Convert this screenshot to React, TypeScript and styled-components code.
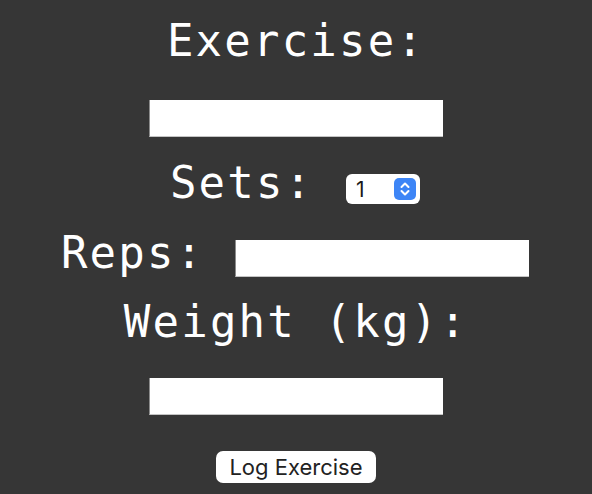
import { FC } from "react";
import styled, { createGlobalStyle } from "styled-components";

const GlobalStyle = createGlobalStyle`
    html, body {
        margin: 0;
        padding: 0;
        background-color: #363636;
    }
    * {
        box-sizing: border-box;
    }
`;

const Page = styled.form`
    width: 592px;
    min-height: 494px;
    display: flex;
    flex-direction: column;
    align-items: center;
    padding-top: 19px;
`;

const Label = styled.label<{ $top?: number; $drop?: number }>`
    display: block;
    height: 44px;
    margin-top: ${({ $top }) => $top ?? 0}px;
    margin-bottom: ${({ $drop }) => $drop ?? 0}px;
    font-family: "DejaVu Sans Mono", "Liberation Mono", monospace;
    font-size: 44px;
    line-height: 44px;
    letter-spacing: 2.2px;
    color: #ffffff;
    white-space: pre;
`;

const TextInput = styled.input<{ $top?: number; $left?: number }>`
    display: block;
    width: 294px;
    height: 37px;
    margin: ${({ $top }) => $top ?? 0}px 0 0 ${({ $left }) => $left ?? 0}px;
    padding: 0 6px;
    background: #ffffff;
    border: none;
    border-left: 1px solid #8c8c8c;
    border-bottom: 1px solid #c4c4c4;
    border-radius: 0;
    font-family: Inter, "Liberation Sans", sans-serif;
    font-size: 18px;
    outline: none;
`;

const Row = styled.div<{ $top: number }>`
    display: flex;
    align-items: flex-end;
    margin-top: ${({ $top }) => $top}px;
    margin-right: 2px;
`;

const SelectBox = styled.div`
    display: flex;
    align-items: center;
    width: 74px;
    height: 30px;
    margin: 0 0 1px 4px;
    padding: 0 4px 0 0;
    background: #ffffff;
    border-radius: 6px;

    select {
        flex: 1;
        min-width: 0;
        height: 100%;
        appearance: none;
        -webkit-appearance: none;
        border: none;
        background: transparent;
        padding: 0 0 0 10px;
        font-family: Inter, "Liberation Sans", sans-serif;
        font-size: 21px;
        color: #1a1a1a;
        outline: none;
    }
`;

const Stepper = styled.span`
    display: flex;
    align-items: center;
    justify-content: center;
    width: 22px;
    height: 22px;
    border-radius: 5px;
    background: #3d85f6;
`;

const SubmitButton = styled.button`
    width: 160px;
    height: 32px;
    margin-top: 36px;
    padding: 0;
    background: #ffffff;
    border: none;
    border-radius: 7px;
    font-family: Inter, "Liberation Sans", sans-serif;
    font-size: 22px;
    color: #222222;
    cursor: pointer;
`;

const App: FC = () => {
    return (
        <>
            <GlobalStyle />
            <Page onSubmit={(e) => e.preventDefault()}>
                <Label htmlFor="exercise">Exercise:</Label>
                <TextInput id="exercise" type="text" $top={37} />
                <Row $top={24}>
                    <Label htmlFor="sets">Sets: </Label>
                    <SelectBox>
                        <select id="sets" defaultValue="1">
                            {[1, 2, 3, 4, 5, 6, 7, 8, 9, 10].map((n) => (
                                <option key={n} value={n}>{n}</option>
                            ))}
                        </select>
                        <Stepper>
                            <svg width="22" height="22" viewBox="0 0 22 22" fill="none" stroke="#ffffff" strokeWidth="2" strokeLinecap="round" strokeLinejoin="round">
                                <path d="M7.5 9 L11 5.5 L14.5 9" />
                                <path d="M7.5 13 L11 16.5 L14.5 13" />
                            </svg>
                        </Stepper>
                    </SelectBox>
                </Row>
                <Row $top={26}>
                    <Label htmlFor="reps" $drop={2}>Reps: </Label>
                    <TextInput id="reps" type="number" $left={2} />
                </Row>
                <Label htmlFor="weight" $top={23}>Weight (kg):</Label>
                <TextInput id="weight" type="number" $top={34} />
                <SubmitButton type="submit">Log Exercise</SubmitButton>
            </Page>
        </>
    );
};

export default App;
